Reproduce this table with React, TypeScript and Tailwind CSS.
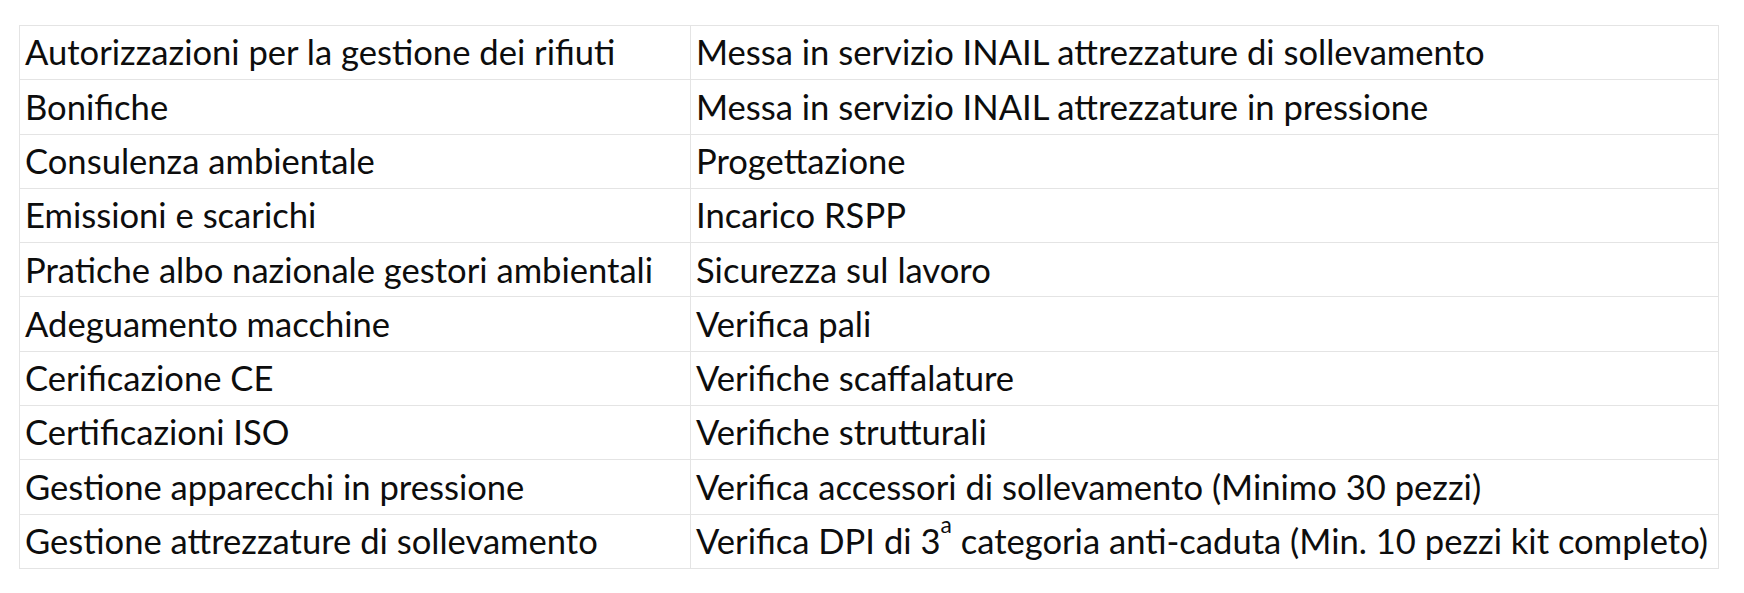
import React from 'react';

const rows: [string, React.ReactNode][] = [
  ['Autorizzazioni per la gestione dei rifiuti', 'Messa in servizio INAIL attrezzature di sollevamento'],
  ['Bonifiche', 'Messa in servizio INAIL attrezzature in pressione'],
  ['Consulenza ambientale', 'Progettazione'],
  ['Emissioni e scarichi', 'Incarico RSPP'],
  ['Pratiche albo nazionale gestori ambientali', 'Sicurezza sul lavoro'],
  ['Adeguamento macchine', 'Verifica pali'],
  ['Cerificazione CE', 'Verifiche scaffalature'],
  ['Certificazioni ISO', 'Verifiche strutturali'],
  ['Gestione apparecchi in pressione', 'Verifica accessori di sollevamento (Minimo 30 pezzi)'],
  [
    'Gestione attrezzature di sollevamento',
    <>
      Verifica DPI di 3<sup className="text-[0.66em] align-[0.4em]">a</sup> categoria anti-caduta (Min. 10 pezzi kit completo)
    </>,
  ],
];

export default function App() {
  return (
    <div className="min-h-[593px] w-[1744px] bg-white pl-[19px] pt-[25px]">
      <table className="border-collapse text-[#0d0d0d] font-['Lato',sans-serif] text-[34.6px]">
        <tbody>
          {rows.map(([left, right], i) => (
            <tr key={i} className="h-[54.3px]">
              <td className="w-[671px] border border-[#e4e4e4] px-[5px] py-0 leading-none">{left}</td>
              <td className="w-[1028px] border border-[#e4e4e4] px-[5px] py-0 leading-none">{right}</td>
            </tr>
          ))}
        </tbody>
      </table>
    </div>
  );
}
